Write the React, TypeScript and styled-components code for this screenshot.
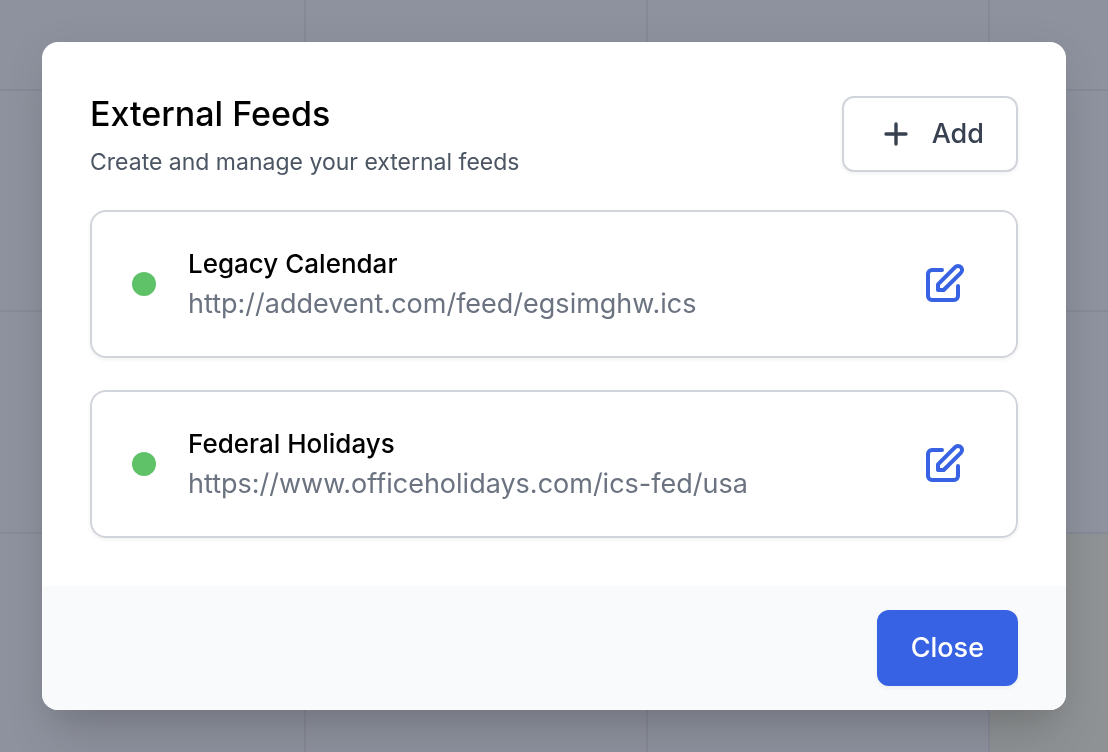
import React from "react";
import styled, { createGlobalStyle } from "styled-components";

const GlobalStyle = createGlobalStyle`
  *, *::before, *::after { box-sizing: border-box; }
  body {
    margin: 0;
    font-family: Inter, "Liberation Sans", sans-serif;
    background: #8e929e;
    -webkit-font-smoothing: antialiased;
  }
  h2, h3, p, ul { margin: 0; padding: 0; }
`;

const CalendarBackdrop = styled.div`
  position: fixed;
  inset: 0;
  display: grid;
  grid-template-columns: 306px 342px 342px 1fr;
  grid-template-rows: 91px 221px 222px 1fr;
`;

const Day = styled.div<{ $today?: boolean }>`
  border: 0 solid #878a96;
  border-right-width: 2px;
  border-bottom-width: 2px;
  background: ${({ $today }) => ($today ? "#8f9294" : "#8e929e")};

  &:nth-child(4n) {
    border-right-width: 0;
  }

  &:nth-child(n + 13) {
    border-bottom-width: 0;
  }
`;

const Page = styled.main`
  position: relative;
  padding: 42px;
`;

const Dialog = styled.section`
  max-width: 1024px;
  margin: 0 auto;
  border-radius: 16px;
  overflow: hidden;
  background: #fff;
  box-shadow: 0 40px 50px -10px rgba(0, 0, 0, 0.1),
    0 20px 20px -10px rgba(0, 0, 0, 0.04),
    0 8px 40px rgba(0, 0, 0, 0.08);
`;

const DialogBody = styled.div`
  display: flex;
  flex-direction: column;
  gap: 32px;
  padding: 48px;
`;

const Header = styled.header`
  display: flex;
  justify-content: space-between;
  align-items: center;
`;

const Title = styled.h2`
  font-size: 34px;
  line-height: 48px;
  font-weight: 500;
  color: #000;
`;

const Subtitle = styled.p`
  margin-top: 8px;
  font-size: 23px;
  line-height: 32px;
  color: #4b5563;
`;

const Button = styled.button<{ $primary?: boolean }>`
  display: flex;
  align-items: center;
  gap: 16px;
  height: 76px;
  padding: 0 32px;
  border: 2px solid ${({ $primary }) => ($primary ? "#3662e3" : "#d1d5db")};
  border-radius: 12px;
  background: ${({ $primary }) => ($primary ? "#3662e3" : "#fff")};
  color: ${({ $primary }) => ($primary ? "#fff" : "#374151")};
  font-family: inherit;
  font-size: 27px;
  line-height: 40px;
  font-weight: 500;
  box-shadow: 0 2px 4px rgba(0, 0, 0, 0.05);
  cursor: pointer;
`;

const FeedList = styled.ul`
  display: flex;
  flex-direction: column;
  gap: 32px;
  list-style: none;
`;

const FeedCard = styled.li`
  display: flex;
  align-items: center;
  gap: 32px;
  padding: 32px 48px 32px 40px;
  border: 2px solid #d1d5db;
  border-radius: 16px;
  box-shadow: 0 2px 4px rgba(0, 0, 0, 0.05);
`;

const StatusDot = styled.span`
  flex: none;
  width: 24px;
  height: 24px;
  border-radius: 50%;
  background: #5fc168;
`;

const FeedText = styled.div`
  flex: 1;
  min-width: 0;
`;

const FeedName = styled.h3`
  font-size: 26px;
  line-height: 40px;
  font-weight: 500;
  color: #000;
`;

const FeedUrl = styled.p`
  font-size: 27px;
  line-height: 40px;
  color: #6b7280;
  overflow-wrap: anywhere;
`;

const EditButton = styled.button`
  display: flex;
  padding: 0;
  border: 0;
  background: none;
  color: #3662e3;
  cursor: pointer;
`;

const Footer = styled.footer`
  display: flex;
  justify-content: flex-end;
  padding: 24px 48px;
  background: #f9fafb;
`;

const PlusIcon = () => (
  <svg width="40" height="40" viewBox="0 0 40 40" fill="none" stroke="currentColor" strokeWidth="3.4" strokeLinecap="round" aria-hidden="true">
    <path d="M20 10v20M10 20h20" />
  </svg>
);

const EditIcon = () => (
  <svg width="48" height="48" viewBox="0 0 24 24" fill="none" stroke="currentColor" strokeWidth="2" strokeLinecap="round" strokeLinejoin="round" aria-hidden="true">
    <path d="M11 5H6a2 2 0 00-2 2v11a2 2 0 002 2h11a2 2 0 002-2v-5m-1.414-9.414a2 2 0 112.828 2.828L11.828 15H9v-2.828l8.586-8.586z" />
  </svg>
);

const feeds = [
  { name: "Legacy Calendar", url: "http://addevent.com/feed/egsimghw.ics" },
  { name: "Federal Holidays", url: "https://www.officeholidays.com/ics-fed/usa" },
];

export default function App() {
  return (
    <>
      <GlobalStyle />
      <CalendarBackdrop aria-hidden="true">
        {Array.from({ length: 16 }, (_, i) => (
          <Day key={i} $today={i === 15} />
        ))}
      </CalendarBackdrop>
      <Page>
        <Dialog role="dialog" aria-modal="true" aria-labelledby="feeds-title">
          <DialogBody>
            <Header>
              <div>
                <Title id="feeds-title">External Feeds</Title>
                <Subtitle>Create and manage your external feeds</Subtitle>
              </div>
              <Button type="button">
                <PlusIcon />
                Add
              </Button>
            </Header>
            <FeedList>
              {feeds.map((feed) => (
                <FeedCard key={feed.name}>
                  <StatusDot />
                  <FeedText>
                    <FeedName>{feed.name}</FeedName>
                    <FeedUrl>{feed.url}</FeedUrl>
                  </FeedText>
                  <EditButton type="button" aria-label={`Edit ${feed.name}`}>
                    <EditIcon />
                  </EditButton>
                </FeedCard>
              ))}
            </FeedList>
          </DialogBody>
          <Footer>
            <Button type="button" $primary>
              Close
            </Button>
          </Footer>
        </Dialog>
      </Page>
    </>
  );
}
